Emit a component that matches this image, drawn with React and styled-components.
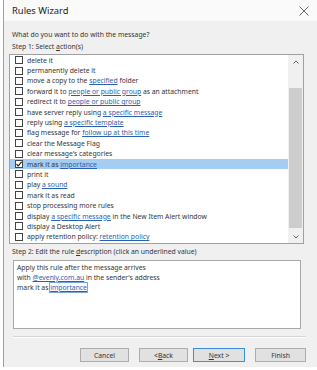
import React from 'react';
import styled, { createGlobalStyle } from 'styled-components';

const GlobalStyle = createGlobalStyle`
  html, body {
    margin: 0;
    padding: 0;
    background: #ffffff;
  }
  body {
    font-family: "Noto Sans", "Open Sans", sans-serif;
    font-size: 6.8px;
    color: #333;
  }
`;

const Window = styled.div`
  margin-left: 3px;
  width: 314px;
  height: 367px;
  border-left: 1px solid #a0a0a0;
  background: #f0f0f0;
  display: flex;
  flex-direction: column;
`;

const TitleBar = styled.div`
  height: 21px;
  background: #fafafa;
  display: flex;
  align-items: center;
  justify-content: space-between;
  padding: 0 9px 0 8px;
  font-size: 9.4px;
  color: #222;
`;

const Body = styled.div`
  display: flex;
  flex-direction: column;
  padding: 8px 0 0 5px;
`;

const Label = styled.div`
  height: 12px;
  line-height: 12px;
  padding-left: 3px;
  white-space: nowrap;
`;

const Key = styled.span`
  text-decoration: underline;
`;

const ListBox = styled.div`
  margin-top: 1px;
  width: 293px;
  height: 188px;
  border: 1px solid #a0a0a0;
  background: #fff;
  display: flex;
`;

const Rows = styled.div`
  flex: 1;
  display: flex;
  flex-direction: column;
`;

const Row = styled.div`
  height: 10.4px;
  display: flex;
  align-items: center;
  gap: 4px;
  padding-left: 5px;
  white-space: nowrap;
  background: ${({ selected }) => (selected ? '#a5cdf1' : 'transparent')};
`;

const Box = styled.span`
  width: 6px;
  height: 6px;
  border: 1px solid #444;
  background: #fff;
  flex: none;
  display: flex;
  align-items: center;
  justify-content: center;
`;

const Link = styled.span`
  color: #2960b0;
  text-decoration: underline;
`;

const ScrollBar = styled.div`
  width: 15px;
  background: #f0f0f0;
  display: flex;
  flex-direction: column;
  align-items: center;
`;

const Arrow = styled.div`
  height: 13px;
  width: 15px;
  display: flex;
  align-items: center;
  justify-content: center;
`;

const Track = styled.div`
  flex: 1;
  display: flex;
  flex-direction: column;
  align-items: center;
`;

const Thumb = styled.div`
  width: 13px;
  height: 140px;
  margin-top: ${({ offset }) => offset}px;
  background: #cdcdcd;
`;

const DescBox = styled.div`
  margin: 2px 0 0 4px;
  width: 288px;
  height: 69px;
  border: 1px solid #a8a8a8;
  background: #fff;
  padding: 2px 3px;
  box-sizing: border-box;
  line-height: 10px;
`;

const Focused = styled.span`
  color: #2960b0;
  text-decoration: underline;
  outline: 1px solid #7aa7dc;
`;

const Separator = styled.div`
  margin: 7px 0 0 4px;
  width: 293px;
  border-top: 1px solid #d5d5d5;
  border-bottom: 1px solid #ffffff;
`;

const Buttons = styled.div`
  margin-top: 10px;
  width: 297px;
  display: flex;
  justify-content: flex-end;
  gap: ${({ gap }) => gap}px;
`;

const Button = styled.div`
  width: ${({ w }) => w || 49}px;
  height: 14px;
  box-sizing: border-box;
  border: 1px solid ${({ primary }) => (primary ? '#3b8ede' : '#adadad')};
  background: #e1e1e1;
  display: flex;
  align-items: center;
  justify-content: center;
  margin-left: ${({ ml }) => ml || 0}px;
  color: #333;
`;

const Check = () => (
  <svg width="6" height="6" viewBox="0 0 6 6">
    <path d="M0.5 3.2 L2.2 5 L5.6 0.8" stroke="#111" strokeWidth="1.1" fill="none" />
  </svg>
);

const Chevron = ({ up }) => (
  <svg width="6" height="4" viewBox="0 0 6 4">
    <path
      d={up ? 'M0.5 3.5 L3 1 L5.5 3.5' : 'M0.5 0.5 L3 3 L5.5 0.5'}
      stroke="#606060"
      strokeWidth="1"
      fill="none"
    />
  </svg>
);

const actions = [
  ['delete it'],
  ['permanently delete it'],
  ['move a copy to the ', 'specified', ' folder'],
  ['forward it to ', 'people or public group', ' as an attachment'],
  ['redirect it to ', 'people or public group'],
  ['have server reply using ', 'a specific message'],
  ['reply using ', 'a specific template'],
  ['flag message for ', 'follow up at this time'],
  ['clear the Message Flag'],
  ["clear message's categories"],
  ['mark it as ', 'importance'],
  ['print it'],
  ['play ', 'a sound'],
  ['mark it as read'],
  ['stop processing more rules'],
  ['display ', 'a specific message', ' in the New Item Alert window'],
  ['display a Desktop Alert'],
  ['apply retention policy: ', 'retention policy'],
];

const App = () => (
  <>
    <GlobalStyle />
    <Window>
      <TitleBar>
        <span>Rules Wizard</span>
        <svg width="10" height="10" viewBox="0 0 10 10">
          <path d="M0.5 0.5 L9.5 9.5 M9.5 0.5 L0.5 9.5" stroke="#555" strokeWidth="0.9" />
        </svg>
      </TitleBar>
      <Body>
        <Label>What do you want to do with the message?</Label>
        <Label>
          Step 1: Select <Key>a</Key>ction(s)
        </Label>
        <ListBox>
          <Rows>
            {actions.map(([a, link, rest], i) => (
              <Row key={i} selected={i === 10}>
                <Box>{i === 10 && <Check />}</Box>
                <span>
                  {a}
                  {link && <Link>{link}</Link>}
                  {rest}
                </span>
              </Row>
            ))}
          </Rows>
          <ScrollBar>
            <Arrow>
              <Chevron up />
            </Arrow>
            <Track>
              <Thumb offset={20} />
            </Track>
            <Arrow>
              <Chevron />
            </Arrow>
          </ScrollBar>
        </ListBox>
        <Label style={{ marginTop: 2 }}>
          Step 2: Edit the rule <Key>d</Key>escription (click an underlined value)
        </Label>
        <DescBox>
          <div>Apply this rule after the message arrives</div>
          <div>
            with <Link>@evenly.com.au</Link> in the sender's address
          </div>
          <div>
            mark it as <Focused>importance</Focused>
          </div>
        </DescBox>
        <Separator />
        <Buttons gap={10}>
          <Button>Cancel</Button>
          <Button>
            &lt; <Key>B</Key>ack
          </Button>
          <Button primary w={52} ml={-5}>
            <Key>N</Key>ext &gt;
          </Button>
          <Button w={51}>Finish</Button>
        </Buttons>
      </Body>
    </Window>
  </>
);

export default App;
